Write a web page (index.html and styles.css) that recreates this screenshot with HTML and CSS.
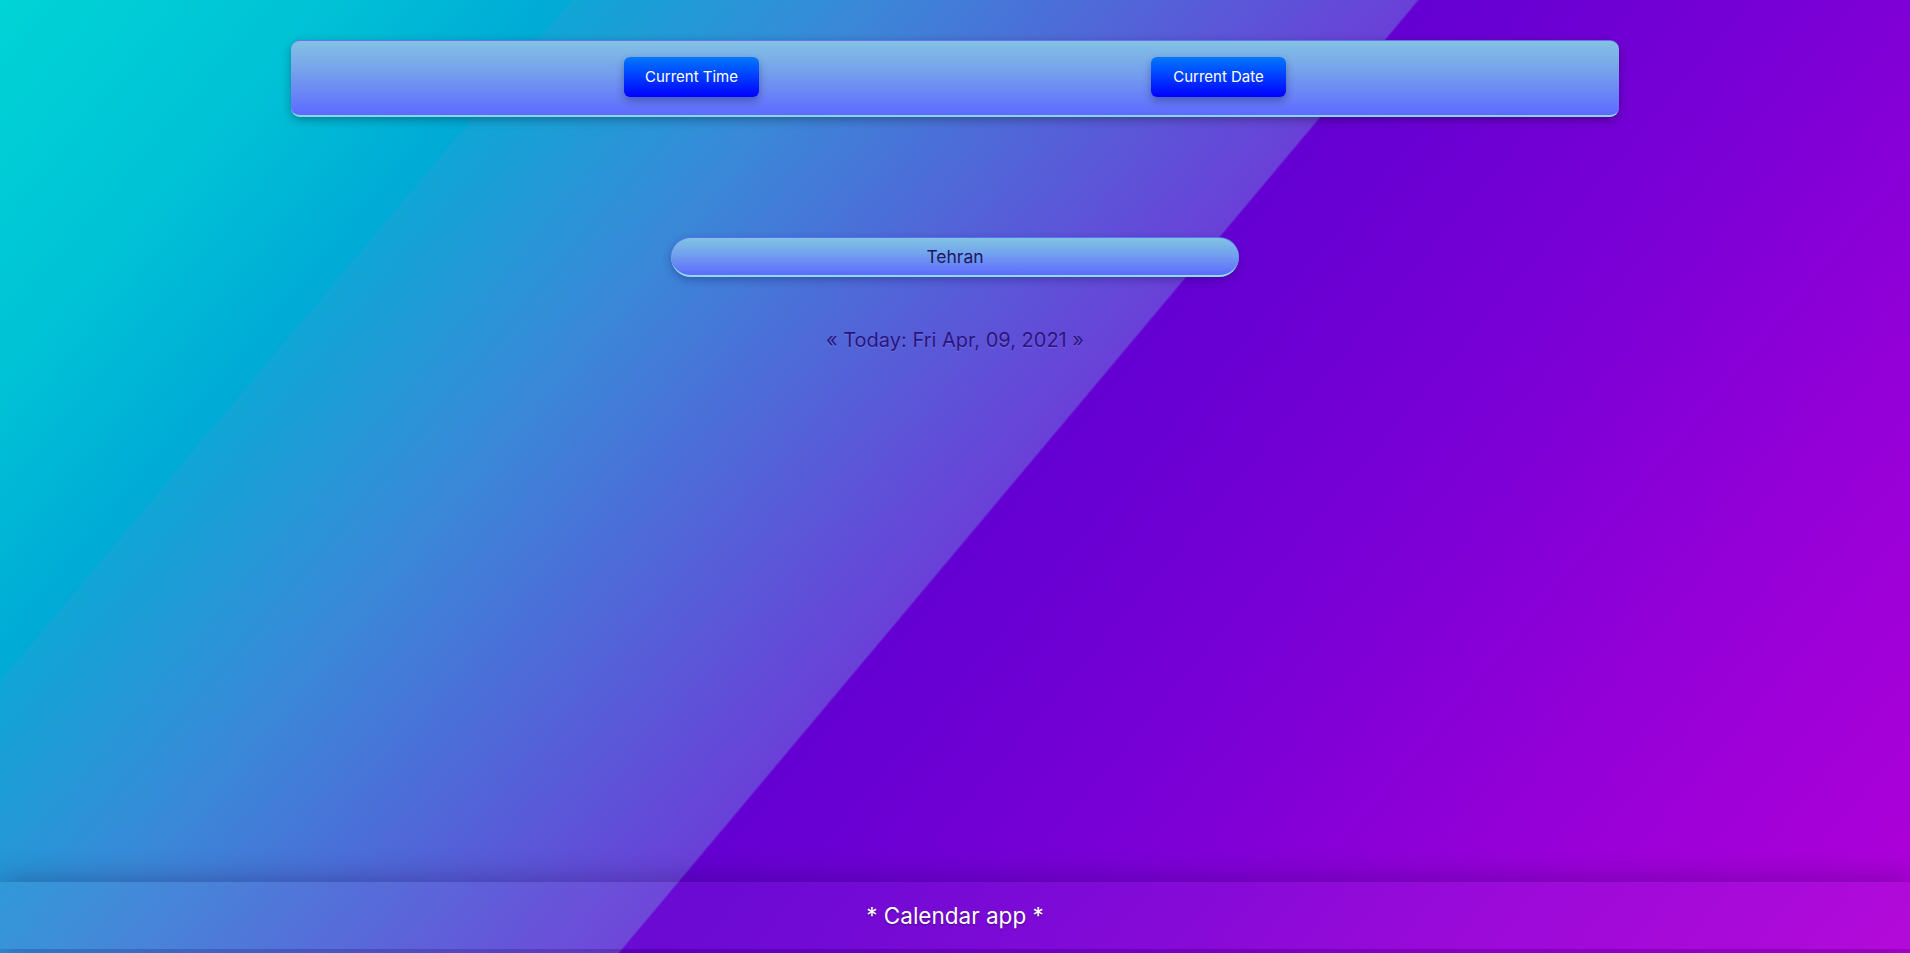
FILE: index.html
```html
<!DOCTYPE html>
<html lang="en">
<head>
<meta charset="utf-8">
<title>Calendar app</title>
<link rel="stylesheet" href="styles.css">
</head>
<body>
<div class="page">
  <header class="topbar">
    <button class="btn">Current Time</button>
    <button class="btn">Current Date</button>
  </header>
  <main class="main">
    <input class="city" type="text" value="Tehran">
    <p class="today">« Today: Fri Apr, 09, 2021 »</p>
  </main>
  <footer class="footer">* Calendar app *</footer>
</div>
</body>
</html>
```
FILE: styles.css
```css
* { box-sizing: border-box; }
html, body { margin: 0; padding: 0; height: 100%; }
body {
  font-family: Inter, "Noto Sans", "Liberation Sans", sans-serif;
  background: linear-gradient(130deg,
    #00d4d6 0%,
    #00c2d6 12%,
    #00aad6 21%,
    #10a6d6 21.2%,
    #3a88d8 32%,
    #6a40d8 52.3%,
    #6400d2 52.4%,
    #7a00d6 68%,
    #9a00d8 85%,
    #b000d8 100%);
  overflow: hidden;
}
.page {
  height: 100vh;
  display: flex;
  flex-direction: column;
  align-items: center;
}
.topbar {
  margin-top: 40px;
  width: 1328px;
  height: 77px;
  display: flex;
  justify-content: center;
  align-items: center;
  gap: 392px;
  padding-bottom: 3px;
  border-radius: 9px;
  background: linear-gradient(to bottom, #82c2e4 0%, #76a2ec 40%, #5e6aff 100%);
  border-top: 1px solid #6a70f0;
  border-bottom: 2px solid #86d8e8;
  box-shadow: 0 3px 10px rgba(0, 0, 0, 0.3);
}
.btn {
  width: 135px;
  height: 40px;
  border: none;
  border-radius: 6px;
  background: linear-gradient(to bottom, #0078ff 0%, #0000ff 100%);
  color: #fff;
  font-family: Inter, "Noto Sans", "Liberation Sans", sans-serif;
  font-size: 15px;
  box-shadow: 0 4px 8px rgba(0, 0, 40, 0.3);
}
.main {
  display: flex;
  flex-direction: column;
  align-items: center;
}
.city {
  margin-top: 120px;
  width: 568px;
  height: 40px;
  border: none;
  border-top: 1px solid #5f6cf6;
  border-bottom: 2px solid #8ae0e8;
  border-radius: 20px;
  background: linear-gradient(to bottom, #80c4e4 0%, #72a0ee 45%, #5e6aff 100%);
  text-align: center;
  font-family: Inter, "Noto Sans", "Liberation Sans", sans-serif;
  font-size: 17.5px;
  color: #1c1a5e;
  box-shadow: 0 3px 8px rgba(20, 0, 80, 0.3);
  outline: none;
}
.today {
  margin: 51px 0 0;
  line-height: 24px;
  font-size: 20px;
  color: #2a1480;
  text-shadow: 0 1px 1px rgba(255, 255, 255, 0.15);
}
.footer {
  margin-top: auto;
  margin-bottom: 4px;
  width: 100%;
  height: 67px;
  display: flex;
  align-items: center;
  justify-content: center;
  font-size: 22.5px;
  color: #fff;
  text-shadow: 0 1px 2px rgba(0, 0, 0, 0.4);
  background: rgba(255, 255, 255, 0.04);
  box-shadow: 0 0 30px rgba(20, 0, 60, 0.35);
}
```
